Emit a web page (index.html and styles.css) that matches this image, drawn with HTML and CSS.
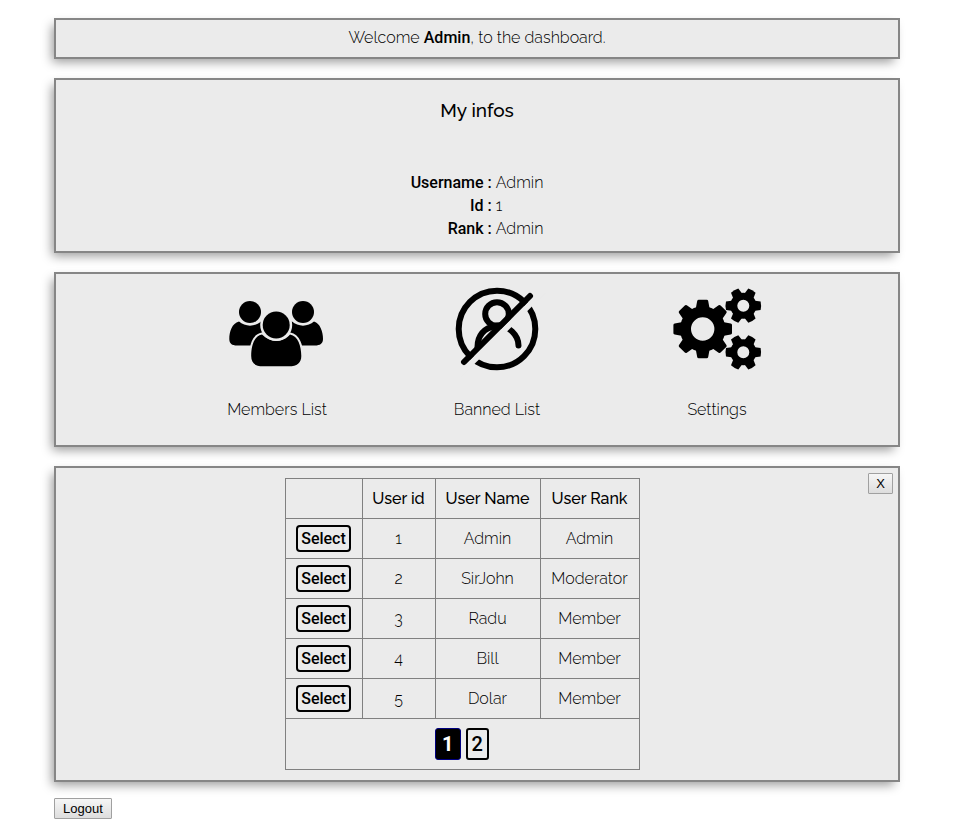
FILE: index.html
```html
<!DOCTYPE html>
<html lang="en">
<head>
<meta charset="utf-8">
<title>Dashboard</title>
<link rel="stylesheet" href="styles.css">
</head>
<body>
<main class="page">
  <section class="panel welcome">Welcome <strong>Admin</strong>, to the dashboard.</section>

  <section class="panel infos">
    <h1 class="infos-title">My infos</h1>
    <dl class="infos-list">
      <dt>Username :</dt><dd>Admin</dd>
      <dt>Id :</dt><dd>1</dd>
      <dt>Rank :</dt><dd>Admin</dd>
    </dl>
  </section>

  <nav class="panel menu">
    <a class="menu-item" href="#members">
      <svg class="menu-icon" viewBox="0 0 100 100" aria-hidden="true">
        <circle cx="23" cy="33" r="11"/>
        <circle cx="76" cy="33" r="11"/>
        <path d="M12 42.500C5 44 2.300 53 2.300 60C2.300 64.500 5 66.500 10 66.500H38V43L34 42.500C28 48 18 48 12 42.500Z"/>
        <path d="M87 42.500C93 44 96 53 96 60C96 64.500 93 66.500 88 66.500H61V43L65 42.500C71 48 81 48 87 42.500Z"/>
        <path class="outlined" d="M35 55.500C27 57 24.200 67 24.200 77C24.200 84 28 87.300 36 87.300H62C70 87.300 74.300 84 74.300 77C74.300 67 71 57 63 55.500C56 64 43 64 35 55.500Z"/>
        <circle class="gap" cx="49.200" cy="46" r="16"/>
        <circle cx="49.200" cy="46" r="13.500"/>
      </svg>
      <span>Members List</span>
    </a>
    <a class="menu-item" href="#banned">
      <svg class="menu-icon lines" viewBox="0 0 100 100" aria-hidden="true">
        <circle cx="50" cy="50" r="38.300"/>
        <circle cx="50" cy="35" r="11.800"/>
        <path d="M30.500 68C30.500 57 37 48.500 48 47.500M50 46.500C62 46.500 71.500 56 71.500 66.500"/>
        <path class="cut" d="M12 96.200L96.200 12"/>
        <path d="M17 83L83 17"/>
      </svg>
      <span>Banned List</span>
    </a>
    <a class="menu-item" href="#settings">
      <svg class="menu-icon" viewBox="0 0 100 100" aria-hidden="true">
        <defs>
          <path id="big-tooth" d="M-7 -20L-5.500 -28Q-5.200 -29.300 -4 -29.300H4Q5.200 -29.300 5.500 -28L7 -20Z"/>
          <path id="small-tooth" d="M-5.200 -10L-4.200 -17.300Q0 -18.300 4.200 -17.300L5.200 -10Z"/>
          <g id="small-gear">
            <circle class="ring" r="9.500" stroke-width="7"/>
            <use href="#small-tooth" transform="rotate(30)"/>
            <use href="#small-tooth" transform="rotate(90)"/>
            <use href="#small-tooth" transform="rotate(150)"/>
            <use href="#small-tooth" transform="rotate(210)"/>
            <use href="#small-tooth" transform="rotate(270)"/>
            <use href="#small-tooth" transform="rotate(330)"/>
          </g>
        </defs>
        <g transform="translate(35.700 50)">
          <circle class="ring" r="17.200" stroke-width="11"/>
          <use href="#big-tooth"/>
          <use href="#big-tooth" transform="rotate(45)"/>
          <use href="#big-tooth" transform="rotate(90)"/>
          <use href="#big-tooth" transform="rotate(135)"/>
          <use href="#big-tooth" transform="rotate(180)"/>
          <use href="#big-tooth" transform="rotate(225)"/>
          <use href="#big-tooth" transform="rotate(270)"/>
          <use href="#big-tooth" transform="rotate(315)"/>
        </g>
        <use href="#small-gear" transform="translate(76.300 26.700)"/>
        <use href="#small-gear" transform="translate(76.300 73.300)"/>
      </svg>
      <span>Settings</span>
    </a>
  </nav>

  <section class="panel members">
    <div class="members-body">
      <table class="users">
        <colgroup><col class="col-action"><col class="col-id"><col class="col-name"><col class="col-rank"></colgroup>
        <thead>
          <tr><td></td><th scope="col">User id</th><th scope="col">User Name</th><th scope="col">User Rank</th></tr>
        </thead>
        <tbody>
          <tr><td><a class="select" href="#user-1">Select</a></td><td>1</td><td>Admin</td><td>Admin</td></tr>
          <tr><td><a class="select" href="#user-2">Select</a></td><td>2</td><td>SirJohn</td><td>Moderator</td></tr>
          <tr><td><a class="select" href="#user-3">Select</a></td><td>3</td><td>Radu</td><td>Member</td></tr>
          <tr><td><a class="select" href="#user-4">Select</a></td><td>4</td><td>Bill</td><td>Member</td></tr>
          <tr><td><a class="select" href="#user-5">Select</a></td><td>5</td><td>Dolar</td><td>Member</td></tr>
        </tbody>
        <tfoot>
          <tr><td colspan="4"><div class="pager"><span class="page-link current">1</span><a class="page-link" href="#page-2">2</a></div></td></tr>
        </tfoot>
      </table>
    </div>
    <button class="button close" type="button">X</button>
  </section>

  <button class="button" type="button">Logout</button>
</main>
</body>
</html>
```
FILE: styles.css
```css
* {
  box-sizing: border-box;
}

body {
  margin: 0;
  background: #fff;
  color: #000;
  font: 300 16px/19px Raleway, Lato, sans-serif;
}

a {
  color: inherit;
  text-decoration: none;
}

.page {
  padding: 18px 54px 16px;
}

.panel {
  margin-bottom: 19px;
  border: 2px solid #868686;
  background: #ebebeb;
  box-shadow: -4px 5px 10px -2px rgba(0, 0, 0, 0.4);
}

.welcome {
  padding: 8px 10px 10px;
  text-align: center;
}

.welcome strong {
  font-family: Roboto, sans-serif;
  font-weight: 500;
}

.infos {
  padding: 18px 10px 11px;
}

.infos-title {
  margin: 0 0 49px;
  font-size: 19px;
  line-height: 24px;
  font-weight: 500;
  text-align: center;
}

.infos-list {
  display: grid;
  grid-template-columns: auto auto;
  justify-content: center;
  column-gap: 4px;
  margin: 0;
  line-height: 23px;
}

.infos-list dt {
  font-family: Roboto, sans-serif;
  font-weight: 500;
  text-align: right;
}

.infos-list dd {
  margin: 0;
}

.menu {
  display: flex;
  justify-content: center;
  padding: 5px 0 26px 40px;
}

.menu-item {
  display: flex;
  flex-direction: column;
  align-items: center;
  gap: 21px;
  width: 220px;
}

.menu-icon {
  width: 100px;
  height: 100px;
}

.menu-icon .gap {
  fill: #ebebeb;
}

.menu-icon .outlined {
  stroke: #ebebeb;
  stroke-width: 4;
  paint-order: stroke;
}

.menu-icon .ring {
  fill: none;
  stroke: #000;
}

.lines {
  fill: none;
  stroke: #000;
  stroke-width: 6;
  stroke-linecap: round;
}

.lines .cut {
  stroke: #ebebeb;
}

.members {
  display: flex;
  align-items: flex-start;
  margin-bottom: 16px;
  padding: 5px 5px 10px 0;
}

.members-body {
  flex: 1;
  padding-top: 5px;
}

.users {
  margin: 0 auto;
  border-collapse: collapse;
  table-layout: fixed;
  width: 355px;
  text-align: center;
}

.col-action {
  width: 77px;
}

.col-id {
  width: 73px;
}

.col-name {
  width: 105px;
}

.col-rank {
  width: 99px;
}

.users th,
.users td {
  height: 40px;
  padding: 0;
  border: 1px solid #808080;
}

.users th {
  font-weight: 500;
}

.users tfoot td {
  height: 51px;
}

.select {
  display: inline-block;
  padding: 2px 3px;
  border: 2px solid #000;
  border-radius: 4px;
  font-family: Roboto, sans-serif;
  font-weight: 500;
}

.pager {
  display: flex;
  justify-content: center;
  gap: 5px;
}

.page-link {
  padding: 2px 4px;
  border: 2px solid #000;
  border-radius: 3px;
  font: 500 20px/24px Roboto, sans-serif;
}

.page-link.current {
  padding: 3px 6px;
  border: 1px solid #000080;
  background: #000;
  color: #fff;
  font-weight: 700;
}

.button {
  height: 21px;
  padding: 0 8px;
  border: 1px solid #a0a0a0;
  border-radius: 1px;
  background: linear-gradient(#f6f6f6, #dddddd);
  color: #000;
  font: 13px/19px "Liberation Sans", Arial, sans-serif;
}

.close {
  flex: none;
  width: 25px;
  padding: 0;
}
```
